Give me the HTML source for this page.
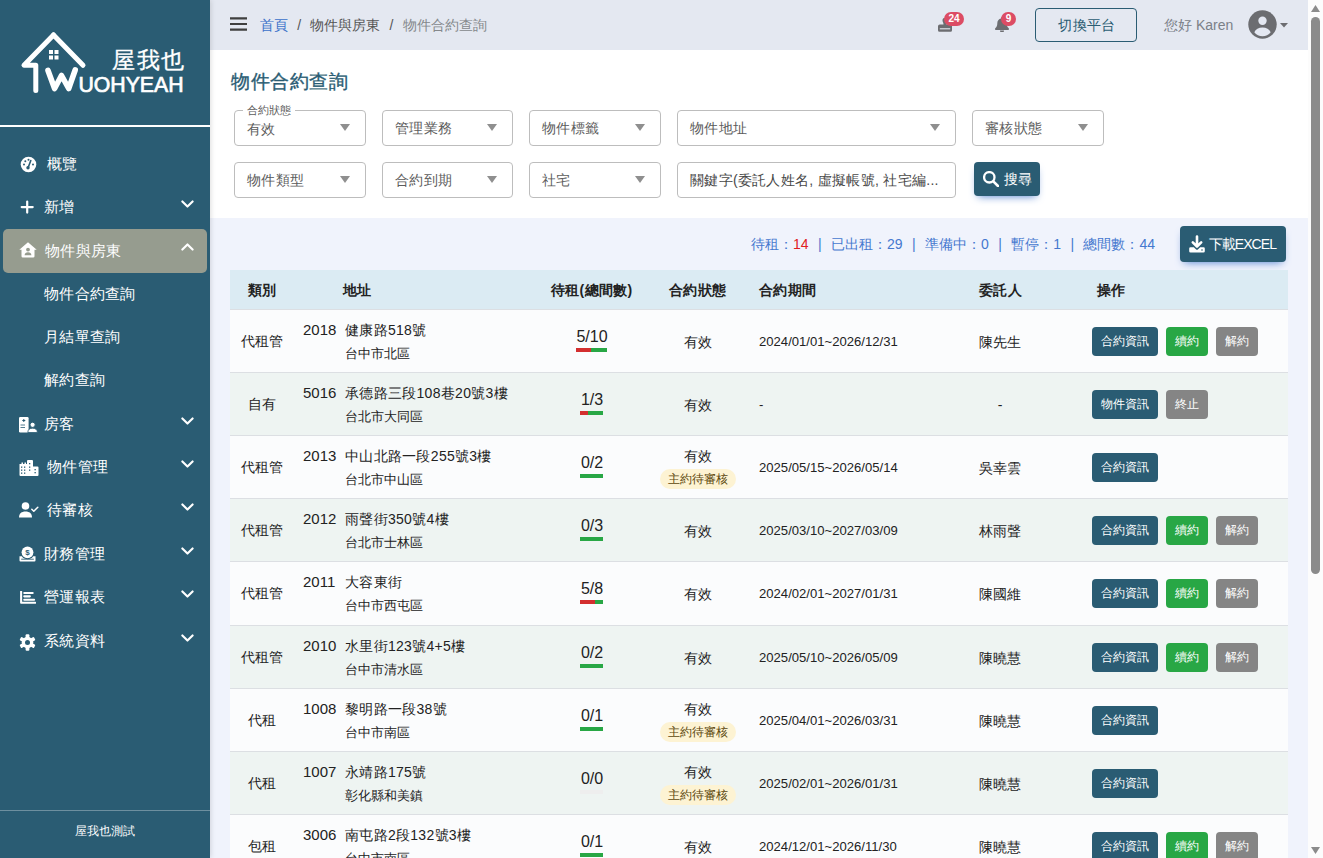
<!DOCTYPE html>
<html lang="zh-Hant">
<head>
<meta charset="utf-8">
<title>物件合約查詢</title>
<style>
*{box-sizing:border-box;margin:0;padding:0}
html,body{width:1323px;height:858px;overflow:hidden;background:#f0f3fc;font-family:"Liberation Sans",sans-serif;color:#222;font-size:14px}
body{position:relative}
.abs{position:absolute}
/* sidebar */
#side{position:absolute;left:0;top:0;width:210px;height:858px;background:#2a5c73;color:#fff;box-shadow:1px 0 5px rgba(0,0,0,.13);z-index:5}
#side .hr{position:absolute;left:0;top:125px;width:210px;height:2px;background:#fff}
#side .foot{position:absolute;left:0;top:810px;width:210px;height:1px;background:#6d8f9f}
#side .footxt{position:absolute;left:0;top:823px;width:210px;text-align:center;font-size:12px;line-height:16px;color:#fff}
.mi{position:absolute;left:0;width:210px;height:42px;color:#fff;font-size:15px;line-height:42px;letter-spacing:.3px}
.mi .tx{position:absolute;top:0}
.mi svg.ic{position:absolute}
.mi svg.chev{position:absolute;left:181px;top:14px}
.mi.act{left:3px;width:204px;height:44px;background:#969c8f;border-radius:5px}
.sub{position:absolute;left:44px;color:#fff;font-size:15px;line-height:20px;letter-spacing:.3px}
/* topbar */
#top{position:absolute;left:210px;top:0;width:1098px;height:50px;background:#e4e8f1}
#crumb{position:absolute;left:50px;top:15px;font-size:14px;line-height:20px;color:#555;white-space:nowrap}
#crumb a{color:#3b71ca;text-decoration:none}
#crumb .sp{margin:0 9.200px}
.badge{position:absolute;background:#dc4c64;color:#fff;font-size:10px;font-weight:bold;border-radius:8px;height:14px;line-height:14px;text-align:center}
#switch{position:absolute;left:825px;top:8px;width:102px;height:34px;border:1px solid #2a5c73;border-radius:4px;color:#2a5c73;font-size:14px;line-height:32px;text-align:center;letter-spacing:.3px;text-indent:2px}
#hello{position:absolute;left:954px;top:15px;font-size:14px;line-height:20px;color:#7b8088;white-space:nowrap}
/* scrollbar */
#sb{position:absolute;left:1308px;top:0;width:15px;height:858px;background:#fcfcfc}
#sb .th{position:absolute;left:3px;top:17px;width:9px;height:557px;background:#8b8b8b;border-radius:6px}
/* panel */
#panel{position:absolute;left:210px;top:50px;width:1098px;height:168px;background:#fff}
h1{position:absolute;left:231px;top:68px;font-size:19px;line-height:28px;font-weight:normal;color:#2a5c73;letter-spacing:.6px;-webkit-text-stroke:.35px #2a5c73}
.sel{position:absolute;height:36px;border:1px solid #bdbdbd;border-radius:4px;background:#fff;color:#5c5c5c;font-size:14px;line-height:34px;padding-left:12px;white-space:nowrap;overflow:hidden;letter-spacing:.3px}
.sel i{position:absolute;right:15px;top:13px;width:0;height:0;border-left:5.500px solid transparent;border-right:5.500px solid transparent;border-top:7.500px solid #8f8f8f}
.lbl{position:absolute;font-size:11px;line-height:12px;color:#5c5c5c;background:#fff;padding:0 4px}
#search{position:absolute;left:974px;top:162px;width:66px;height:34px;background:#2a5c73;border-radius:4px;color:#fff;font-size:14px;line-height:34px;box-shadow:0 4px 9px -4px rgba(59,113,202,.95)}
#excel{position:absolute;left:1180px;top:226px;width:106px;height:36px;background:#2a5c73;border-radius:4px;color:#fff;font-size:14px;line-height:36px;box-shadow:0 4px 9px -4px rgba(59,113,202,.95)}
#stats{position:absolute;left:751px;top:234px;font-size:14px;line-height:20px;color:#4578cf;white-space:nowrap}
#stats b{font-weight:normal;color:#e02020}
#stats s{text-decoration:none;margin:0 9.400px}
/* table */
#thead{position:absolute;left:230px;top:270px;width:1058px;height:39px;background:#dbebf3}
#thead span{position:absolute;top:10px;font-size:14px;line-height:20px;font-weight:bold;color:#222;white-space:nowrap;letter-spacing:.3px}
.row{position:absolute;left:230px;width:1058px;height:64px;border-top:1px solid #dcdfe3;background:#fbfcfd}
.row.alt{background:#eef4f2}
.row span{position:absolute;white-space:nowrap;color:#222}
.c1{left:0;width:64px;text-align:center;top:22px;font-size:13.600px;letter-spacing:.4px;text-indent:.4px;line-height:20px}
.c2{left:73px;top:10px;font-size:15px;line-height:20px}
.c3{left:115px;top:9.500px;font-size:14px;line-height:20px;letter-spacing:.3px}
.c3b{left:115px;top:34.500px;font-size:12.500px;line-height:18px}
.c4{left:322px;width:80px;text-align:center;top:16.500px;font-size:16px;line-height:20px}
.bar{position:absolute;left:350px;top:38px;height:4px;width:23px;background:#28a745}
.bar u{position:absolute;left:0;top:0;height:4px;background:#d32f2f}
.c5{left:418px;width:100px;text-align:center;top:22px;font-size:14px;line-height:20px}
.c5.up{top:10px}
.tag{left:430px;top:33px;width:76px;height:20px;border-radius:10px;background:#fdf3d3;font-size:12px;line-height:20px;text-align:center;color:#5c470c!important;letter-spacing:.2px}
.c6{left:529px;top:22px;font-size:13.100px;line-height:20px}
.c7{left:720px;width:100px;text-align:center;top:22px;font-size:14px;line-height:20px}
.btn{position:absolute;top:17px;height:29px;border-radius:4px;color:#fff!important;font-size:12px;line-height:29px;text-align:center}
.b1{left:862px;width:66px;background:#2a5c73}
.b2{left:936px;width:42px;background:#28a745}
.b3{left:986px;width:42px;background:#858585}
</style>
</head>
<body>
<div id="side">
  <svg class="abs" style="left:0;top:0" width="210" height="125" viewBox="0 0 210 125">
<path d="M53.500 35L24 65.300h11.800V90.500" fill="none" stroke="#fff" stroke-width="5" stroke-linecap="round" stroke-linejoin="round"/>
<path d="M53.500 35L83 65.300" fill="none" stroke="#fff" stroke-width="5" stroke-linecap="round"/>
<g fill="#fff"><rect x="49" y="50" width="4" height="4"/><rect x="54.500" y="50" width="4" height="4"/><rect x="49" y="55.500" width="4" height="4"/><rect x="54.500" y="55.500" width="4" height="4"/></g>
<path d="M48 70.500L54.600 88.500L61.500 75.500L68.700 88.500L75.200 70" fill="none" stroke="#fff" stroke-width="5.600" stroke-linecap="round" stroke-linejoin="round"/>
<text x="78.500" y="91.500" font-family="Liberation Sans, sans-serif" font-size="21.500" fill="#fff" stroke="#fff" stroke-width=".7" textLength="105" lengthAdjust="spacingAndGlyphs">UOHYEAH</text>
<text x="112" y="67.500" font-family="Liberation Sans, sans-serif" font-size="23" fill="#fff" stroke="#fff" stroke-width=".3" textLength="72" lengthAdjust="spacing">屋我也</text>
</svg>
<div class="mi" style="top:143px"><svg class="ic" style="left:20px;top:13px" width="17" height="17" viewBox="0 0 17 17"><circle cx="8.500" cy="8.500" r="7.800" fill="#fff"/><path d="M8.200 11.500L10.800 4.500" stroke="#2a5c73" stroke-width="1.600" stroke-linecap="round"/><circle cx="8" cy="11.800" r="1.700" fill="#2a5c73"/><circle cx="4" cy="8.500" r="1" fill="#2a5c73"/><circle cx="5.300" cy="5.200" r="1" fill="#2a5c73"/><circle cx="8.500" cy="3.800" r="1" fill="#2a5c73"/><circle cx="13" cy="8.500" r="1" fill="#2a5c73"/></svg><span class="tx" style="left:47px">概覽</span></div>
<div class="mi" style="top:186px"><svg class="ic" style="left:20px;top:14px" width="14" height="14" viewBox="0 0 14 14"><path d="M7.200 1.600v11M1.700 7.100h11" stroke="#fff" stroke-width="2.200" stroke-linecap="round"/></svg><span class="tx" style="left:44px">新增</span><svg class="chev" width="14" height="9" viewBox="0 0 14 9"><path d="M2 1.500L7.500 7 13 1.500" transform="translate(-.5 0) scale(.93)" fill="none" stroke="#fff" stroke-width="2.300" stroke-linecap="round" stroke-linejoin="round"/></svg></div>
<div class="mi act" style="top:229px"><svg class="ic" style="left:16px;top:13px" width="18" height="16" viewBox="0 0 18 16"><path d="M9 0.300L0.300 7.800h2.200v6.400a1.300 1.300 0 0 0 1.300 1.300h10.400a1.300 1.300 0 0 0 1.300-1.300V7.800h2.200z" fill="#fff"/><circle cx="9" cy="7.600" r="1.900" fill="#969c8f"/><path d="M5.600 13.200c0-2 1.400-3 3.400-3s3.400 1 3.400 3z" fill="#969c8f"/></svg><span class="tx" style="left:42px;line-height:43px">物件與房東</span><svg class="chev" style="left:178px" width="14" height="9" viewBox="0 0 14 9"><path d="M2 7L7.500 1.500 13 7" transform="translate(-.5 0) scale(.93)" fill="none" stroke="#fff" stroke-width="2.300" stroke-linecap="round" stroke-linejoin="round"/></svg></div>
<div class="mi" style="top:403px"><svg class="ic" style="left:19px;top:13.500px" width="19" height="16" viewBox="0 0 19 16"><rect x="0" y="0" width="9.600" height="15.500" rx="1.200" fill="#fff"/><path d="M4.800 2v3M3.300 3.500h3" stroke="#2a5c73" stroke-width="1"/><path d="M1.500 8h4.500M1.500 10.500h4.500" stroke="#2a5c73" stroke-width=".8"/><circle cx="13.600" cy="7.800" r="2.600" fill="#fff" stroke="#2a5c73" stroke-width="1"/><path d="M8.800 15.500c0-3 2-4.300 4.800-4.300s4.800 1.300 4.800 4.300z" fill="#fff" stroke="#2a5c73" stroke-width=".8"/></svg><span class="tx" style="left:44px">房客</span><svg class="chev" width="14" height="9" viewBox="0 0 14 9"><path d="M2 1.500L7.500 7 13 1.500" transform="translate(-.5 0) scale(.93)" fill="none" stroke="#fff" stroke-width="2.300" stroke-linecap="round" stroke-linejoin="round"/></svg></div>
<div class="mi" style="top:446px"><svg class="ic" style="left:19px;top:13.500px" width="20" height="16" viewBox="0 0 20 16"><path d="M0.500 4h2V2.500h1.500V4h1.500V2.500H7V4h1V1a1 1 0 0 1 1-1h4a1 1 0 0 1 1 1v5.500h4.500a1 1 0 0 1 1 1V15a1 1 0 0 1-1 1H1.500a1 1 0 0 1-1-1z" fill="#fff"/><g fill="#2a5c73"><rect x="2" y="6.500" width="1.300" height="1.300"/><rect x="5" y="6.500" width="1.300" height="1.300"/><rect x="2" y="9.500" width="1.300" height="1.300"/><rect x="5" y="9.500" width="1.300" height="1.300"/><rect x="2" y="12.500" width="1.300" height="1.300"/><rect x="5" y="12.500" width="1.300" height="1.300"/><rect x="10" y="3" width="1.300" height="1.300"/><rect x="10" y="6.500" width="1.300" height="1.300"/><rect x="10" y="9.500" width="1.300" height="1.300"/><rect x="15.500" y="9" width="1.300" height="1.300"/><rect x="15.500" y="12" width="1.300" height="1.300"/></g></svg><span class="tx" style="left:47px">物件管理</span><svg class="chev" width="14" height="9" viewBox="0 0 14 9"><path d="M2 1.500L7.500 7 13 1.500" transform="translate(-.5 0) scale(.93)" fill="none" stroke="#fff" stroke-width="2.300" stroke-linecap="round" stroke-linejoin="round"/></svg></div>
<div class="mi" style="top:489px"><svg class="ic" style="left:19px;top:13px" width="20" height="16" viewBox="0 0 20 16"><circle cx="6.500" cy="4" r="3.800" fill="#fff"/><path d="M0 15.500c0-4 2.500-6 6.500-6s6.500 2 6.500 6z" fill="#fff"/><path d="M12.800 7.200l2 2 4-4" fill="none" stroke="#fff" stroke-width="1.500" stroke-linecap="round" stroke-linejoin="round"/></svg><span class="tx" style="left:47px">待審核</span><svg class="chev" width="14" height="9" viewBox="0 0 14 9"><path d="M2 1.500L7.500 7 13 1.500" transform="translate(-.5 0) scale(.93)" fill="none" stroke="#fff" stroke-width="2.300" stroke-linecap="round" stroke-linejoin="round"/></svg></div>
<div class="mi" style="top:533px"><svg class="ic" style="left:19px;top:13px" width="17" height="17" viewBox="0 0 17 17"><path d="M0.500 10.300h16v4.200a1 1 0 0 1-1 1h-14a1 1 0 0 1-1-1z" fill="#fff"/><circle cx="8.500" cy="6.300" r="6.900" fill="#2a5c73"/><circle cx="8.500" cy="6.300" r="5.900" fill="#fff"/><path d="M2.200 13.200h12.600" stroke="#2a5c73" stroke-width=".9"/><text x="8.500" y="9.200" font-size="8" font-weight="bold" text-anchor="middle" fill="#2a5c73" font-family="Liberation Sans, sans-serif">$</text></svg><span class="tx" style="left:44px">財務管理</span><svg class="chev" width="14" height="9" viewBox="0 0 14 9"><path d="M2 1.500L7.500 7 13 1.500" transform="translate(-.5 0) scale(.93)" fill="none" stroke="#fff" stroke-width="2.300" stroke-linecap="round" stroke-linejoin="round"/></svg></div>
<div class="mi" style="top:576px"><svg class="ic" style="left:19.500px;top:14.500px" width="16" height="13.200" viewBox="0 0 17 14"><path d="M1.200 0.500v12h15" fill="none" stroke="#fff" stroke-width="2.200" stroke-linecap="round" stroke-linejoin="round"/><path d="M4.500 2.200h9M4.500 5.700h6M4.500 9.200h10.500" stroke="#fff" stroke-width="2.200" stroke-linecap="round"/></svg><span class="tx" style="left:44px">營運報表</span><svg class="chev" width="14" height="9" viewBox="0 0 14 9"><path d="M2 1.500L7.500 7 13 1.500" transform="translate(-.5 0) scale(.93)" fill="none" stroke="#fff" stroke-width="2.300" stroke-linecap="round" stroke-linejoin="round"/></svg></div>
<div class="mi" style="top:620px"><svg class="ic" style="left:19px;top:13.500px" width="17" height="17" viewBox="-8.500 -8.500 17 17"><g fill="#fff"><circle r="5.800"/><g id="t"><rect x="-1.900" y="-8.200" width="3.800" height="16.400" rx="1"/></g><use href="#t" transform="rotate(60)"/><use href="#t" transform="rotate(120)"/></g><circle r="2.500" fill="#2a5c73"/></svg><span class="tx" style="left:44px">系統資料</span><svg class="chev" width="14" height="9" viewBox="0 0 14 9"><path d="M2 1.500L7.500 7 13 1.500" transform="translate(-.5 0) scale(.93)" fill="none" stroke="#fff" stroke-width="2.300" stroke-linecap="round" stroke-linejoin="round"/></svg></div>
<div class="sub" style="top:284px">物件合約查詢</div>
<div class="sub" style="top:327px">月結單查詢</div>
<div class="sub" style="top:370px">解約查詢</div>
<div class="hr"></div>
  <div class="foot"></div>
  <div class="footxt">屋我也測試</div>
</div>
<div id="top">
  <div id="crumb"><a>首頁</a><span class="sp">/</span>物件與房東<span class="sp">/</span><span style="color:#85888c">物件合約查詢</span></div>
  <svg class="abs" style="left:20px;top:17px" width="17" height="14" viewBox="0 0 17 14"><path d="M0 1.300h17M0 7h17M0 12.700h17" stroke="#3f3f3f" stroke-width="2.200"/></svg>
<svg class="abs" style="left:728px;top:17px" width="14" height="15" viewBox="0 0 14 15"><path d="M4.500 3.200a2.500 2.500 0 0 1 5 0c0 1.800-1 2.300-1 4.300h3.700a1.800 1.800 0 0 1 1.800 1.800v4a1.500 1.500 0 0 1-1.500 1.500h-11A1.500 1.500 0 0 1 0 13.300v-4a1.800 1.800 0 0 1 1.800-1.800h3.700c0-2-1-2.500-1-4.300z" fill="#6c6d71"/><path d="M1.800 11.800h10.400" stroke="#e4e8f1" stroke-width="1.100"/></svg>
<div class="badge" style="left:734px;top:12px;width:20px">24</div>
<svg class="abs" style="left:785px;top:17px" width="14" height="15" viewBox="0 0 14 15"><path d="M7 0a1 1 0 0 1 1 1v.6c2.300.5 3.700 2.300 3.700 4.700 0 2.700.8 3.700 1.800 4.700.3.300.5.600.5 1 0 .5-.4 1-1 1H1c-.6 0-1-.5-1-1 0-.4.200-.7.500-1 1-1 1.800-2 1.800-4.700 0-2.400 1.400-4.200 3.700-4.700V1a1 1 0 0 1 1-1z" fill="#6c6d71"/><path d="M5 13.500h4a2 2 0 0 1-4 0z" fill="#6c6d71"/></svg>
<div class="badge" style="left:791px;top:12px;width:15px">9</div>
<svg class="abs" style="left:1038px;top:10px" width="29" height="29" viewBox="0 0 29 29"><circle cx="14.500" cy="14.500" r="14.200" fill="#6c6d71"/><circle cx="14.500" cy="10.800" r="4.200" fill="#e4e8f2"/><path d="M6.300 22.300c1.200-3.200 4.500-4.800 8.200-4.800s7 1.600 8.200 4.800a10.500 10.500 0 0 1-16.400 0z" fill="#e4e8f2"/></svg>
<svg class="abs" style="left:1070px;top:23px" width="8" height="5" viewBox="0 0 8 5"><path d="M0 0h8L4 4.500z" fill="#6c6d71"/></svg>
<div id="switch">切換平台</div>
  <div id="hello">您好 Karen</div>
</div>
<div id="panel"></div>
<h1>物件合約查詢</h1>

<div class="sel" style="left:234px;top:110px;width:132px;line-height:36px">有效<i></i></div>
<div class="lbl" style="left:243px;top:104px">合約狀態</div>
<div class="sel" style="left:382px;top:110px;width:131px">管理業務<i></i></div>
<div class="sel" style="left:529px;top:110px;width:132px">物件標籤<i></i></div>
<div class="sel" style="left:677px;top:110px;width:279px">物件地址<i></i></div>
<div class="sel" style="left:972px;top:110px;width:132px">審核狀態<i></i></div>
<div class="sel" style="left:234px;top:162px;width:132px">物件類型<i></i></div>
<div class="sel" style="left:382px;top:162px;width:131px">合約到期<i></i></div>
<div class="sel" style="left:529px;top:162px;width:132px">社宅<i></i></div>
<div class="sel" style="left:677px;top:162px;width:279px;color:#484848">關鍵字(委託人姓名, 虛擬帳號, 社宅編...</div>
<div id="search"><svg class="abs" style="left:9px;top:9px" width="16" height="16" viewBox="0 0 16 16"><circle cx="6.300" cy="6.300" r="5.200" fill="none" stroke="#fff" stroke-width="2.300"/><path d="M10.300 10.300L15 15" stroke="#fff" stroke-width="2.6" stroke-linecap="round"/></svg><span class="abs" style="left:30px;top:0">搜尋</span></div>
<div id="stats">待租：<b>14</b><s>|</s>已出租：29<s>|</s>準備中：0<s>|</s>暫停：1<s>|</s>總間數：44</div>
<div id="excel"><svg class="abs" style="left:8.500px;top:8.500px" width="16" height="18" viewBox="0 0 16 18"><path d="M8 1.500v9.500M3.800 7.300L8 11.500l4.200-4.200" fill="none" stroke="#fff" stroke-width="2.600" stroke-linecap="round" stroke-linejoin="round"/><path d="M1.500 12.200h3.300l2.100 2.100a1.550 1.550 0 0 0 2.200 0l2.100-2.100h3.300a1.300 1.300 0 0 1 1.300 1.300v2.700a1.300 1.300 0 0 1-1.300 1.300h-13a1.300 1.300 0 0 1-1.300-1.300v-2.700a1.300 1.300 0 0 1 1.300-1.300z" fill="#fff"/><circle cx="13" cy="15" r=".8" fill="#2a5c73"/></svg><span class="abs" style="left:28.500px;top:0;letter-spacing:-.9px">下載EXCEL</span></div>
<div id="thead"><span style="left:18px">類別</span><span style="left:113px">地址</span><span style="left:321px">待租(總間數)</span><span style="left:439px">合約狀態</span><span style="left:529px">合約期間</span><span style="left:749px">委託人</span><span style="left:867px">操作</span></div>
<div class="row" style="top:309px"><span class="c1">代租管</span><span class="c2">2018</span><span class="c3">健康路518號</span><span class="c3b">台中市北區</span><span class="c4">5/10</span><span class="bar" style="left:345.5px;width:31px"><u style="width:15px"></u></span><span class="c5">有效</span><span class="c6">2024/01/01~2026/12/31</span><span class="c7">陳先生</span><span class="btn b1">合約資訊</span><span class="btn b2">續約</span><span class="btn b3">解約</span></div>
<div class="row alt" style="top:372px"><span class="c1">自有</span><span class="c2">5016</span><span class="c3">承德路三段108巷20號3樓</span><span class="c3b">台北市大同區</span><span class="c4">1/3</span><span class="bar" style="left:349.5px;width:23px"><u style="width:8px"></u></span><span class="c5">有效</span><span class="c6">-</span><span class="c7">-</span><span class="btn b1">物件資訊</span><span class="btn b3" style="left:936px">終止</span></div>
<div class="row" style="top:435px"><span class="c1">代租管</span><span class="c2">2013</span><span class="c3">中山北路一段255號3樓</span><span class="c3b">台北市中山區</span><span class="c4">0/2</span><span class="bar" style="left:349.5px;width:23px"></span><span class="c5 up">有效</span><span class="tag">主約待審核</span><span class="c6">2025/05/15~2026/05/14</span><span class="c7">吳幸雲</span><span class="btn b1">合約資訊</span></div>
<div class="row alt" style="top:498px"><span class="c1">代租管</span><span class="c2">2012</span><span class="c3">雨聲街350號4樓</span><span class="c3b">台北市士林區</span><span class="c4">0/3</span><span class="bar" style="left:349.5px;width:23px"></span><span class="c5">有效</span><span class="c6">2025/03/10~2027/03/09</span><span class="c7">林雨聲</span><span class="btn b1">合約資訊</span><span class="btn b2">續約</span><span class="btn b3">解約</span></div>
<div class="row" style="top:561px"><span class="c1">代租管</span><span class="c2">2011</span><span class="c3">大容東街</span><span class="c3b">台中市西屯區</span><span class="c4">5/8</span><span class="bar" style="left:349.5px;width:23px"><u style="width:15px"></u></span><span class="c5">有效</span><span class="c6">2024/02/01~2027/01/31</span><span class="c7">陳國維</span><span class="btn b1">合約資訊</span><span class="btn b2">續約</span><span class="btn b3">解約</span></div>
<div class="row alt" style="top:625px"><span class="c1">代租管</span><span class="c2">2010</span><span class="c3">水里街123號4+5樓</span><span class="c3b">台中市清水區</span><span class="c4">0/2</span><span class="bar" style="left:349.5px;width:23px"></span><span class="c5">有效</span><span class="c6">2025/05/10~2026/05/09</span><span class="c7">陳曉慧</span><span class="btn b1">合約資訊</span><span class="btn b2">續約</span><span class="btn b3">解約</span></div>
<div class="row" style="top:688px"><span class="c1">代租</span><span class="c2">1008</span><span class="c3">黎明路一段38號</span><span class="c3b">台中市南區</span><span class="c4">0/1</span><span class="bar" style="left:349.5px;width:23px"></span><span class="c5 up">有效</span><span class="tag">主約待審核</span><span class="c6">2025/04/01~2026/03/31</span><span class="c7">陳曉慧</span><span class="btn b1">合約資訊</span></div>
<div class="row alt" style="top:751px"><span class="c1">代租</span><span class="c2">1007</span><span class="c3">永靖路175號</span><span class="c3b">彰化縣和美鎮</span><span class="c4">0/0</span><span class="bar" style="left:349.5px;width:23px;background:#eeeeee"></span><span class="c5 up">有效</span><span class="tag">主約待審核</span><span class="c6">2025/02/01~2026/01/31</span><span class="c7">陳曉慧</span><span class="btn b1">合約資訊</span></div>
<div class="row" style="top:814px"><span class="c1">包租</span><span class="c2">3006</span><span class="c3">南屯路2段132號3樓</span><span class="c3b">台中市南區</span><span class="c4">0/1</span><span class="bar" style="left:349.5px;width:23px"></span><span class="c5">有效</span><span class="c6">2024/12/01~2026/11/30</span><span class="c7">陳曉慧</span><span class="btn b1">合約資訊</span><span class="btn b2">續約</span><span class="btn b3">解約</span></div>
<div id="sb"><div class="th"></div><svg class="abs" style="left:3px;top:5px" width="9" height="7" viewBox="0 0 9 7"><path d="M4.500 0L9 7H0z" fill="#8b8b8b"/></svg><svg class="abs" style="left:3px;top:847px" width="9" height="7" viewBox="0 0 9 7"><path d="M0 0h9L4.500 7z" fill="#8b8b8b"/></svg></div>
</body>
</html>
